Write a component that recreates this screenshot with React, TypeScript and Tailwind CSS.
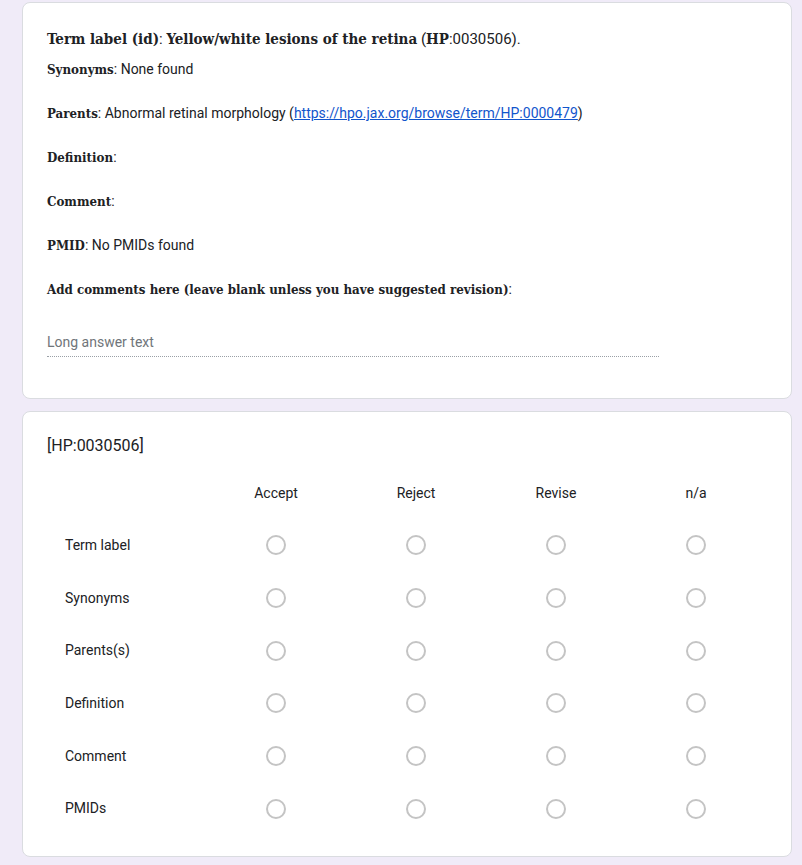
import React from "react";

function Label({ children }: { children: React.ReactNode }) {
  return (
    <span className="font-bold font-['DejaVu_Serif',serif] [font-stretch:condensed]">{children}</span>
  );
}

const rows = ["Term label", "Synonyms", "Parents(s)", "Definition", "Comment", "PMIDs"];
const cols = ["Accept", "Reject", "Revise", "n/a"];

export default function App() {
  return (
    <div className="min-h-[865px] bg-[#f0ebf8] pt-[2px] pb-4 font-['Roboto',sans-serif] text-[#202124]">
      <div className="ml-[22px] w-[770px] rounded-lg border border-[#dadce0] bg-white pl-6 pr-6 pt-6 pb-[41px]">
        <div className="h-6 overflow-visible whitespace-nowrap text-[15px] leading-6">
          <Label>Term label (id)</Label>: <Label>Yellow/white lesions of the retina</Label> (<Label>HP</Label>:0030506).
        </div>
        <div className="mt-2 h-5 whitespace-nowrap text-[14px] leading-5">
          <span className="text-[13.2px]"><Label>Synonyms</Label></span>: None found
        </div>
        <div className="mt-6 h-5 whitespace-nowrap text-[14px] leading-5">
          <span className="text-[13.2px]"><Label>Parents</Label></span>: Abnormal retinal morphology (
          <a className="text-[#1155cc] underline" href="#">https://hpo.jax.org/browse/term/HP:0000479</a>)
        </div>
        <div className="mt-6 h-5 whitespace-nowrap text-[14px] leading-5">
          <span className="text-[13.2px]"><Label>Definition</Label></span>:
        </div>
        <div className="mt-6 h-5 whitespace-nowrap text-[14px] leading-5">
          <span className="text-[13.2px]"><Label>Comment</Label></span>:
        </div>
        <div className="mt-6 h-5 whitespace-nowrap text-[14px] leading-5">
          <span className="text-[13.2px]"><Label>PMID</Label></span>: No PMIDs found
        </div>
        <div className="mt-6 h-5 whitespace-nowrap text-[14px] leading-5">
          <span className="text-[13.2px]"><Label>Add comments here (leave blank unless you have suggested revision)</Label></span>:
        </div>
        <div className="mt-[33px] w-[612px] border-b border-dotted border-[#9aa0a6] pb-[4px] text-[14px] leading-5 text-[#70757a]">
          Long answer text
        </div>
      </div>

      <div className="ml-[22px] mt-3 w-[770px] rounded-lg border border-[#dadce0] bg-white px-6 pt-6 pb-[21px]">
        <div className="h-5 text-[16px] leading-5">[HP:0030506]</div>
        <div className="mt-[11px] grid grid-cols-[159px_140px_140px_140px_140px] text-[14px]">
          <div className="h-[52px]" />
          {cols.map((c) => (
            <div key={c} className="flex h-[52px] items-center justify-center">
              {c}
            </div>
          ))}
          {rows.map((r) => (
            <React.Fragment key={r}>
              <div className="flex h-[52.7px] items-center pl-[18px]">{r}</div>
              {cols.map((c) => (
                <div key={c} className="flex h-[52.7px] items-center justify-center">
                  <div className="h-5 w-5 rounded-full border-2 border-[#c4c4c4]" />
                </div>
              ))}
            </React.Fragment>
          ))}
        </div>
      </div>
    </div>
  );
}
